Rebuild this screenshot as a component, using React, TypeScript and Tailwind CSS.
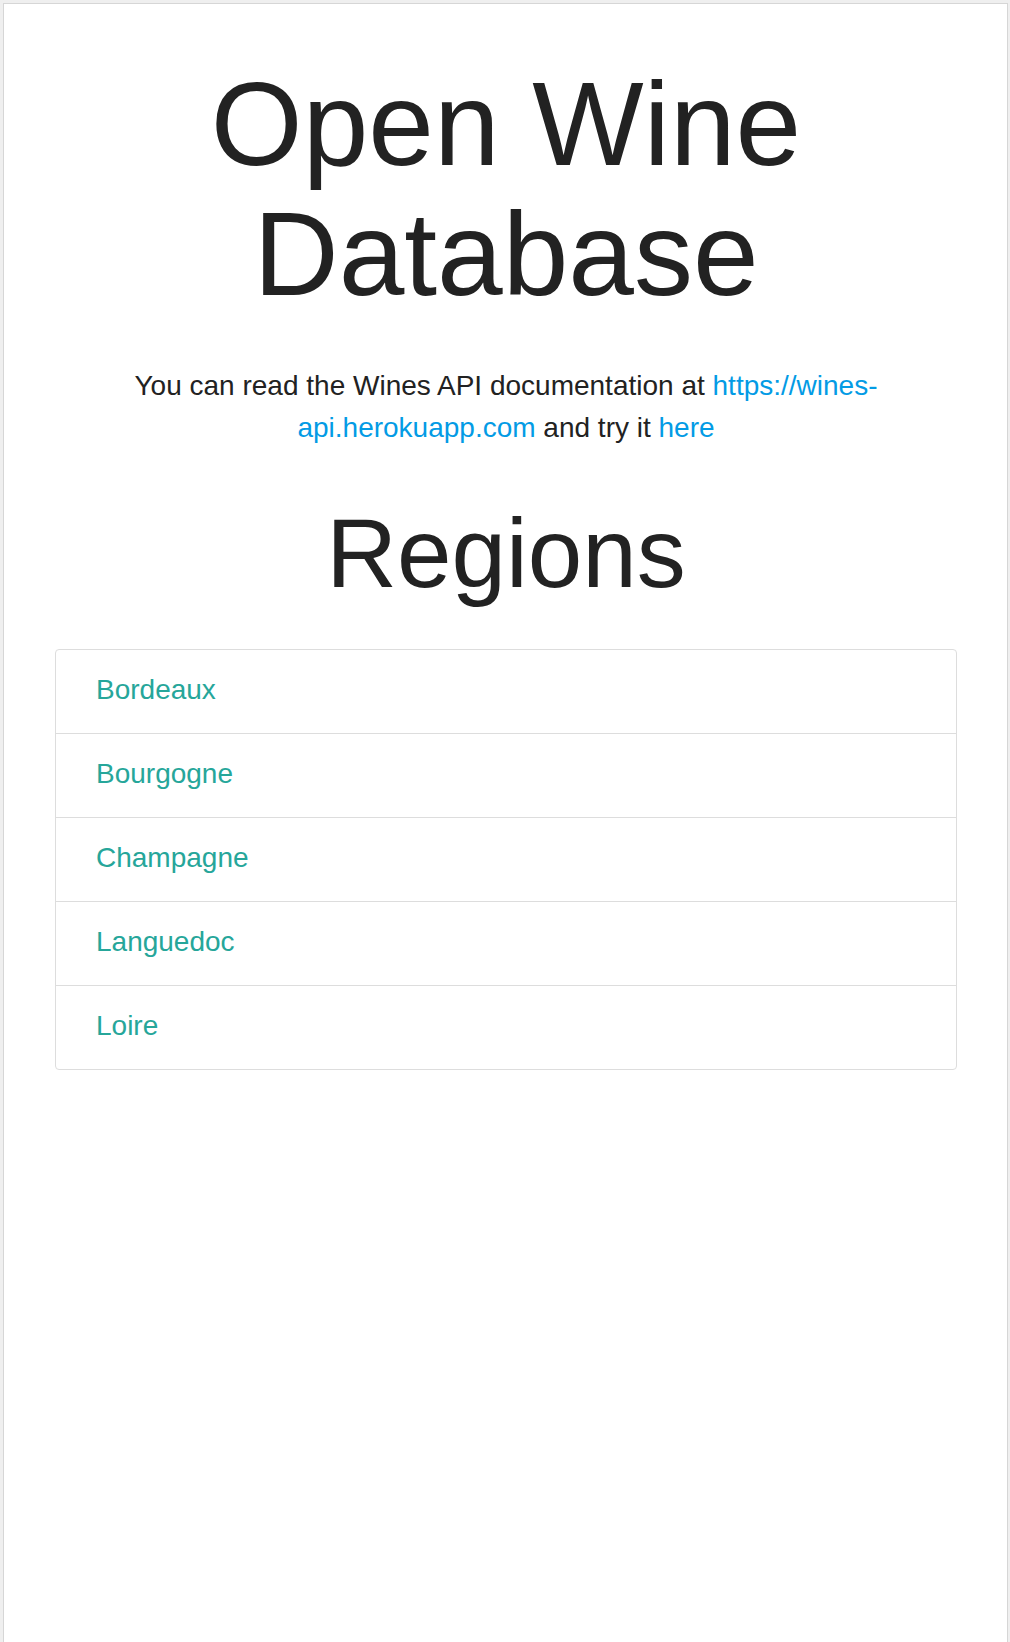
import React from "react";

const regions = ["Bordeaux", "Bourgogne", "Champagne", "Languedoc", "Loire"];

export default function App() {
  return (
    <div
      className="min-h-[1642px] bg-[#efefef] pt-[3px] pl-[3px] pr-[2px] text-[#222222]"
      style={{ fontFamily: '"Liberation Sans", Arial, sans-serif' }}
    >
      <div className="min-h-[1639px] bg-white border border-b-0 border-[#d6d6d6] pl-[51px] pr-[50px] pb-10">
        <h1 className="mt-[56px] text-center text-[118px] leading-[1.1] font-normal">
          Open Wine
          <br />
          Database
        </h1>

        <p className="mt-[45px] text-center text-[28px] leading-[42px]">
          You can read the Wines API documentation at{" "}
          <a href="#" className="text-[#039be5]">
            https://wines-<wbr />api.herokuapp.com
          </a>{" "}
          and try it{" "}
          <a href="#" className="text-[#039be5]">
            here
          </a>
        </p>

        <h2 className="mt-[51px] text-center text-[98px] leading-[1.1] font-normal">Regions</h2>

        {/* region list */}
        <ul className="mt-[42px] flex flex-col">
          {regions.map((r, i) => (
            <li
              key={r}
              className={`border border-[#dddddd] -mb-px pt-[19px] pb-[22px] pl-[40px] text-[28px] leading-[42px] ${
                i === 0 ? "rounded-t-[4px]" : ""
              } ${i === regions.length - 1 ? "rounded-b-[4px]" : ""}`}
            >
              <a href="#" className="text-[#26a69a]">
                {r}
              </a>
            </li>
          ))}
        </ul>
      </div>
    </div>
  );
}
